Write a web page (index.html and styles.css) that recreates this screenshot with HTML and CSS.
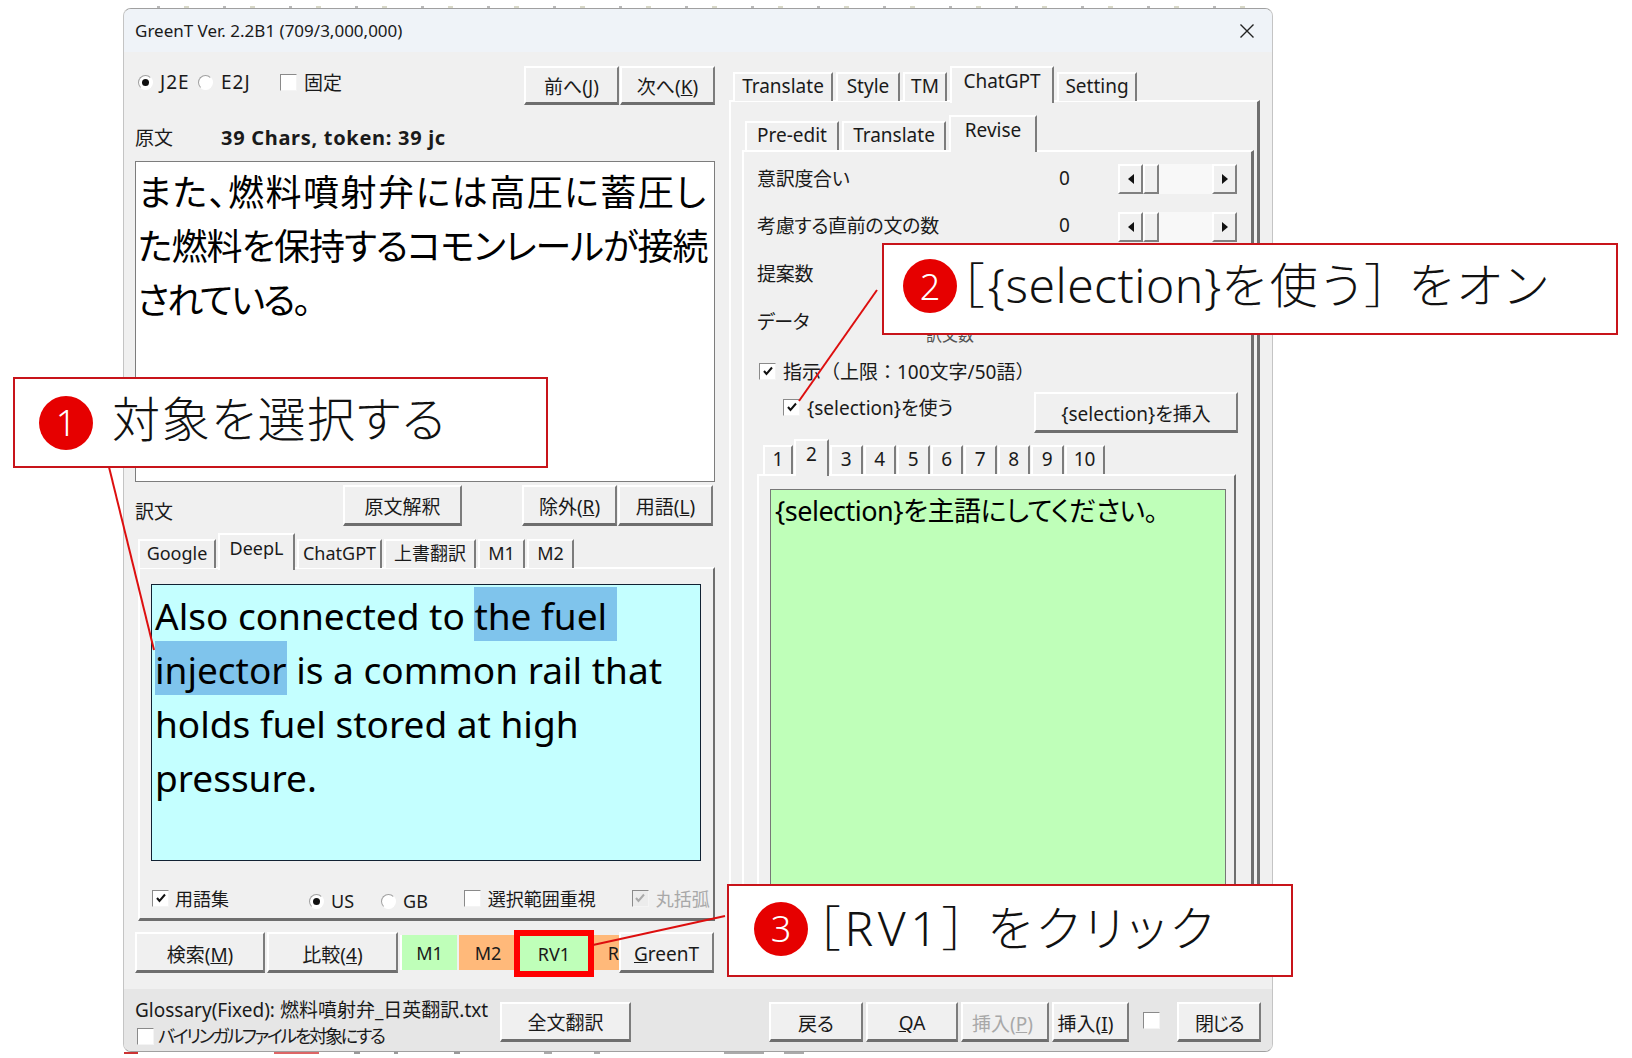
FILE: index.html
```html
<!DOCTYPE html>
<html lang="ja">
<head>
    <meta charset="utf-8">
    <title>GreenT</title>
    <link rel="stylesheet" href="styles.css">
</head>
<body>
<div class="over-strip"></div>
<div class="window">
    <div class="title-bar">
        <span>GreenT Ver. 2.2B1 (709/3,000,000)</span>
        <svg class="close-icon" width="16" height="16" viewBox="0 0 16 16"><path d="M1.5 1.5L14.5 14.5M14.5 1.5L1.5 14.5" stroke="#222" stroke-width="1.4" fill="none"/></svg>
    </div>
    <div class="main">
        <div class="left-col">
            <div class="top-row">
                <div class="mode-opts">
                    <span class="radio on"></span><span class="opt-j2e">J2E</span>
                    <span class="radio"></span><span class="opt-e2j">E2J</span>
                    <span class="chk"></span><span>固定</span>
                </div>
                <div class="btn-pair">
                    <button class="btn">前へ(<u>J</u>)</button>
                    <button class="btn">次へ(<u>K</u>)</button>
                </div>
            </div>
            <div class="src-label">
                <span class="src-title">原文</span>
                <b>39 Chars, token: 39 jc</b>
            </div>
            <div class="src-box"><span class="src-wide">また、燃料噴射弁には高圧に蓄圧し</span><br><span class="src-tight">た燃料を保持するコモンレールが接続</span><br><span class="src-last">されている。</span></div>
            <div class="mid-row">
                <span class="mid-title">訳文</span>
                <button class="btn btn-explain">原文解釈</button>
                <div class="btn-pair">
                    <button class="btn">除外(<u>R</u>)</button>
                    <button class="btn">用語(<u>L</u>)</button>
                </div>
            </div>
            <div class="tabs tabs-result">
                <div class="tab">Google</div>
                <div class="tab active">DeepL</div>
                <div class="tab">ChatGPT</div>
                <div class="tab">上書翻訳</div>
                <div class="tab">M1</div>
                <div class="tab">M2</div>
            </div>
            <div class="panel panel-result">
                <div class="result-box">Also connected to <span class="sel">the fuel&nbsp;<br>injector</span> is a common rail that<br>holds fuel stored at high<br>pressure.</div>
                <div class="result-opts">
                    <span class="chk checked"><svg width="12" height="12" viewBox="0 0 12 12"><path d="M2 6l2.5 3L10 2.5" stroke="#111" stroke-width="2" fill="none"/></svg></span>
                    <span class="opt-glossary">用語集</span>
                    <span class="radio on low"></span><span class="opt-us low">US</span>
                    <span class="radio low"></span><span class="opt-gb low">GB</span>
                    <span class="chk"></span><span class="opt-range">選択範囲重視</span>
                    <span class="chk checked off"><svg width="12" height="12" viewBox="0 0 12 12"><path d="M2 6l2.5 3L10 2.5" stroke="#aaa" stroke-width="2" fill="none"/></svg></span>
                    <span class="opt-paren">丸括弧</span>
                </div>
            </div>
            <div class="cmd-row">
                <button class="btn">検索(<u>M</u>)</button>
                <button class="btn">比較(<u>4</u>)</button>
                <div class="flat green">M1</div>
                <div class="flat orange">M2</div>
                <div class="flat green picked">RV1</div>
                <div class="flat orange clipped">R</div>
                <button class="btn"><u>G</u>reenT</button>
            </div>
        </div>
        <div class="right-col">
            <div class="tabs tabs-main">
                <div class="tab">Translate</div>
                <div class="tab">Style</div>
                <div class="tab">TM</div>
                <div class="tab active">ChatGPT</div>
                <div class="tab">Setting</div>
            </div>
            <div class="panel panel-main">
                <div class="tabs tabs-sub">
                    <div class="tab">Pre-edit</div>
                    <div class="tab">Translate</div>
                    <div class="tab active">Revise</div>
                </div>
                <div class="panel panel-sub">
                    <div class="param-row">
                        <span class="param-name">意訳度合い</span><span class="param-val">0</span>
                        <div class="scroll"><span class="sb-btn"><i class="arrow-l"></i></span><span class="sb-thumb"></span><span class="sb-track"></span><span class="sb-btn"><i class="arrow-r"></i></span></div>
                    </div>
                    <div class="param-row">
                        <span class="param-name">考慮する直前の文の数</span><span class="param-val">0</span>
                        <div class="scroll"><span class="sb-btn"><i class="arrow-l"></i></span><span class="sb-thumb"></span><span class="sb-track"></span><span class="sb-btn"><i class="arrow-r"></i></span></div>
                    </div>
                    <div class="param-row">
                        <span class="param-name">提案数</span>
                    </div>
                    <div class="param-row">
                        <span class="param-name">データ</span>
                        <span class="param-hidden">訳文数</span>
                    </div>
                    <div class="instr-row">
                        <span class="chk checked"><svg width="12" height="12" viewBox="0 0 12 12"><path d="M2 6l2.5 3L10 2.5" stroke="#111" stroke-width="2" fill="none"/></svg></span>
                        <span class="no-palt">指示（上限：100文字/50語）</span>
                    </div>
                    <div class="sel-row">
                        <div class="sel-opt">
                            <span class="chk checked"><svg width="12" height="12" viewBox="0 0 12 12"><path d="M2 6l2.5 3L10 2.5" stroke="#111" stroke-width="2" fill="none"/></svg></span>
                            <span>{selection}を使う</span>
                        </div>
                        <button class="btn btn-insert">{selection}を挿入</button>
                    </div>
                    <div class="tabs tabs-num">
                        <div class="tab">1</div>
                        <div class="tab active">2</div>
                        <div class="tab">3</div>
                        <div class="tab">4</div>
                        <div class="tab">5</div>
                        <div class="tab">6</div>
                        <div class="tab">7</div>
                        <div class="tab">8</div>
                        <div class="tab">9</div>
                        <div class="tab">10</div>
                    </div>
                    <div class="panel panel-num">
                        <div class="instr-box">{selection}を主語にしてください。</div>
                    </div>
                </div>
            </div>
        </div>
    </div>
    <div class="footer">
        <div class="foot-info">
            <div>Glossary(Fixed): 燃料噴射弁_日英翻訳.txt</div>
            <div class="foot-bi"><span class="chk"></span><span>バイリンガルファイルを対象にする</span></div>
        </div>
        <button class="btn btn-full">全文翻訳</button>
        <div class="foot-btns">
            <button class="btn">戻る</button>
            <button class="btn"><u>Q</u>A</button>
            <button class="btn off">挿入(<u>P</u>)</button>
            <button class="btn">挿入(<u>I</u>)</button>
            <span class="chk"></span>
            <button class="btn btn-close">閉じる</button>
        </div>
    </div>
</div>
<div class="under-strip"></div>

<svg class="leaders" width="1632" height="1058" viewBox="0 0 1632 1058">
    <path d="M109 467L154 650" />
    <path d="M877 290L799 401" />
    <path d="M725 916L593 945" />
</svg>

<div class="callout callout-1"><span class="num">1</span><span class="note">対象を選択する</span></div>
<div class="callout callout-2"><span class="num">2</span><span class="note">［<span class="note-sel">{selection}</span>を使う］ をオン</span></div>
<div class="callout callout-3"><span class="num">3</span><span class="note">［RV1］ をクリック</span></div>
</body>
</html>
```

FILE: styles.css
```css
*{
    box-sizing: border-box;
}
html, body{
    margin: 0;
    padding: 0;
    height: 1058px;
    overflow: hidden;
    background: #fff;
}
body{
    position: relative;
    font-family: "Noto Sans", "Noto Sans CJK JP", sans-serif;
    font-feature-settings: "palt";
    font-size: 19px;
    color: #1a1a1a;
}
.no-palt{
    font-feature-settings: normal;
}
.over-strip{
    height: 2px;
    width: 1150px;
    margin: 6px 0 0 123px;
    background: repeating-linear-gradient(90deg, #fff 0 34px, #b9b9b9 34px 37px, #fff 37px 61px, #d8d8c8 61px 66px);
}
.window{
    margin: 0 0 0 123px;
    width: 1150px;
    height: 1044px;
    background: #f0f0f0;
    border: 1px solid #c4c4c4;
    border-top-color: #a0a0a0;
    border-bottom-color: #a0a0a0;
    border-radius: 8px;
    overflow: hidden;
    display: flex;
    flex-direction: column;
}
.title-bar{
    height: 43px;
    flex: none;
    background: #eff3f8;
    display: flex;
    align-items: center;
    justify-content: space-between;
    padding: 0 17px 0 11px;
    font-size: 17px;
}
.close-icon{
    display: block;
}
.main{
    height: 937px;
    flex: none;
    display: flex;
    padding-left: 11px;
    gap: 14px;
}
.left-col{
    width: 580px;
    flex: none;
    padding-top: 14px;
}
.right-col{
    width: 531px;
    flex: none;
    padding-top: 14px;
}

/* buttons */
.btn{
    font: inherit;
    color: inherit;
    height: 100%;
    padding: 1px 0 0;
    background: #f0f0f0;
    border: 0;
    border-top: 2px solid #fff;
    border-left: 2px solid #fff;
    border-right: 2px solid #7c7c7c;
    border-bottom: 3px solid #6e6e6e;
    white-space: nowrap;
}
.btn.off{
    color: #a8a8a8;
}
.btn-pair{
    display: grid;
    grid-template-columns: 95px 95px;
    column-gap: 1px;
}

/* checks and radios */
.chk{
    width: 17px;
    height: 17px;
    flex: none;
    background: #fff;
    border: 1px solid #8a8a8a;
    border-right-color: #f4f4f4;
    border-bottom-color: #f4f4f4;
    display: inline-flex;
    align-items: center;
    justify-content: center;
}
.chk.off{
    background: #ececec;
}
.radio{
    width: 15px;
    height: 15px;
    flex: none;
    background: #fff;
    border-radius: 50%;
    border: 1px solid #a0a0a0;
    border-right-color: #fff;
    border-bottom-color: #fff;
    display: inline-block;
    position: relative;
}
.radio.on::after{
    content: "";
    position: absolute;
    left: 3px;
    top: 3px;
    width: 7px;
    height: 7px;
    border-radius: 50%;
    background: #111;
}

/* left side */
.top-row{
    height: 39px;
    display: flex;
    justify-content: space-between;
}
.mode-opts{
    display: flex;
    align-items: center;
    height: 32px;
    padding-left: 3px;
}
.opt-j2e{
    width: 29px;
    margin: 0 9px 0 7px;
    letter-spacing: 1px;
}
.opt-e2j{
    width: 28px;
    margin: 0 31px 0 8px;
    letter-spacing: 1px;
}
.mode-opts .chk + span{
    margin-left: 7px;
}
.src-label{
    margin-top: 20px;
    height: 24px;
    display: flex;
    align-items: center;
}
.src-label b{
    font-size: 20px;
    letter-spacing: 0.7px;
}
.src-title{
    width: 86px;
}
.src-box{
    margin-top: 12px;
    height: 321px;
    background: #fff;
    border: 1px solid #7d7d7d;
    padding: 4px 2px 0;
    font-size: 36px;
    line-height: 54px;
    color: #000;
    overflow: hidden;
    white-space: nowrap;
}
.src-wide{
    letter-spacing: 1.5px;
}
.src-tight{
    letter-spacing: -0.9px;
}
.src-last{
    letter-spacing: -2px;
    margin-left: -1px;
}
.mid-row{
    margin-top: 3px;
    height: 41px;
    display: flex;
}
.mid-title{
    width: 208px;
    padding-top: 12px;
}
.btn-explain{
    width: 119px;
    margin-right: 60px;
}

/* tabs */
.tabs{
    display: grid;
    align-items: end;
    column-gap: 2px;
    position: relative;
    z-index: 1;
}
.tab{
    height: 29px;
    background: #f0f0f0;
    border-top: 2px solid #fff;
    border-left: 2px solid #fff;
    border-right: 2px solid #7c7c7c;
    text-align: center;
    line-height: 24px;
    white-space: nowrap;
}
.tab.active{
    height: 37px;
    margin-bottom: -2px;
    line-height: 26px;
    padding-bottom: 8px;
}
.tabs-result{
    margin-top: 7px;
    height: 34px;
    padding-left: 3px;
    font-size: 18px;
    grid-template-columns: 78px 77px 85px 92px 47px 47px;
}
.tabs-main{
    height: 35px;
    margin-top: 0;
    padding-left: 4px;
    grid-template-columns: 100px 64px 44px 104px 80px;
    column-gap: 3px;
}
.tabs-sub{
    height: 36px;
    margin-top: 12px;
    padding-left: 3px;
    grid-template-columns: 94px 104px 88px;
    column-gap: 3px;
}
.tabs-num{
    height: 37px;
    margin-top: 13px;
    padding-left: 6px;
    grid-template-columns: 30px 35px repeat(7, 32.5px) 40px;
    column-gap: 1px;
}
.panel{
    background: #f0f0f0;
    border-top: 2px solid #fff;
    border-left: 2px solid #fff;
    border-right: 3px solid #6e6e6e;
    border-bottom: 3px solid #6e6e6e;
}

/* result panel */
.panel-result{
    height: 354px;
    margin-left: 3px;
    border-right-width: 2px;
    padding: 15px 12px 0 11px;
}
.result-box{
    height: 277px;
    background: #c4ffff;
    border: 1px solid #123;
    padding: 4px 3px 0;
    font-size: 37px;
    line-height: 54px;
    color: #000;
    white-space: nowrap;
}
.sel{
    background: #7fc4ec;
    padding-top: 3px;
}
.result-opts{
    margin-top: 22px;
    height: 30px;
    display: flex;
    align-items: center;
    white-space: nowrap;
    padding-left: 1px;
    font-size: 18px;
}
.result-opts > *{
    flex: none;
}
.low{
    margin-top: 6px;
}
.opt-glossary{
    width: 134px;
    margin-left: 6px;
}
.opt-us{
    margin: 6px 27px 0 7px;
}
.opt-gb{
    margin: 6px 36px 0 7px;
}
.opt-range{
    margin: 0 36px 0 7px;
}
.opt-paren{
    margin-left: 7px;
    color: #a8a8a8;
}
.cmd-row{
    margin-top: 11px;
    height: 41px;
    display: grid;
    grid-template-columns: 130px 131px 57px 58px 68px 28px 95px;
    column-gap: 2px;
}
.cmd-row .btn, .foot-btns .btn{
    padding-top: 3px;
}
.flat{
    margin: 3px 0 3px;
    padding-top: 1px;
    display: flex;
    align-items: center;
    justify-content: center;
    font-size: 18px;
}
.green{
    background: #bfffb9;
    border-left: 2px solid #fff;
}
.orange{
    background: #ffb97a;
}
.picked{
    position: relative;
    outline: 6px solid #f00;
    outline-offset: 0;
    margin: 4px -1px 2px 1px;
    border: 0;
}
.clipped{
    justify-content: flex-end;
    overflow: hidden;
    margin-right: -2px;
}

/* right side */
.panel-main{
    height: 862px;
    padding: 0 3px 0 11px;
    margin-top: -1px;
}
.panel-sub{
    height: 800px;
    padding: 2px 13px 0 13px;
}
.param-row{
    height: 48px;
    display: flex;
    align-items: center;
    position: relative;
}
.param-row:first-child{
    height: 47px;
}
.param-name{
    width: 302px;
    flex: none;
    letter-spacing: -0.3px;
}
.param-val{
    width: 59px;
    flex: none;
}
.param-hidden{
    font-size: 16px;
    margin-top: 26px;
    margin-left: -133px;
    color: #555;
}
.scroll{
    width: 119px;
    height: 30px;
    margin-top: 3px;
    display: flex;
}
.sb-btn{
    width: 25px;
    flex: none;
    background: #f0f0f0;
    border-top: 2px solid #fff;
    border-left: 2px solid #fff;
    border-right: 2px solid #808080;
    border-bottom: 2px solid #808080;
    display: flex;
    align-items: center;
    justify-content: center;
}
.sb-thumb{
    width: 16px;
    flex: none;
    background: #f0f0f0;
    border-top: 2px solid #fff;
    border-left: 2px solid #fff;
    border-right: 2px solid #808080;
    border-bottom: 2px solid #808080;
}
.sb-track{
    flex: 1;
    background: #f8f8f8;
}
.arrow-l{
    border: 5px solid transparent;
    border-right: 6px solid #111;
    border-left: 0;
}
.arrow-r{
    border: 5px solid transparent;
    border-left: 6px solid #111;
    border-right: 0;
}
.instr-row{
    margin-top: 14px;
    height: 24px;
    display: flex;
    align-items: center;
    gap: 7px;
    padding-left: 2px;
}
.sel-row{
    display: flex;
    justify-content: space-between;
    height: 41px;
}
.sel-opt{
    display: flex;
    align-items: center;
    gap: 7px;
    height: 24px;
    margin-top: 12px;
    padding-left: 26px;
}
.btn-insert{
    width: 204px;
    margin-top: 9px;
    height: 41px;
}
.panel-num{
    height: 440px;
    padding: 13px 8px 0 11px;
    border-right-width: 2px;
    width: 479px;
}
.instr-box{
    height: 420px;
    background: #bfffb9;
    border: 1px solid #777;
    padding: 2px 4px;
    font-size: 27px;
    letter-spacing: -0.5px;
    line-height: 38px;
    color: #000;
}

/* footer */
.footer{
    flex: 1;
    background: #e6e6e6;
    display: flex;
    padding-left: 11px;
    position: relative;
}
.foot-info{
    width: 365px;
    padding-top: 9px;
    line-height: 24px;
    white-space: nowrap;
}
.foot-bi{
    display: flex;
    align-items: center;
    gap: 4px;
    margin: 2px 0 0 2px;
    font-size: 18px;
    letter-spacing: -2.3px;
}
.btn-full{
    width: 131px;
    height: 40px;
    margin-top: 13px;
}
.foot-btns{
    margin-left: 138px;
    margin-top: 13px;
    height: 40px;
    display: grid;
    grid-template-columns: 94px 92px 88px 77px 17px 84px;
    column-gap: 3px;
    align-items: start;
}
.foot-btns .chk{
    margin: 10px 0 0 11px;
}
.foot-btns .btn:nth-child(3){
    padding-right: 5px;
}
.foot-btns .btn:nth-child(4){
    padding-right: 10px;
}
.foot-btns .btn-close{
    margin-left: 25px;
    width: 84px;
    letter-spacing: -1.5px;
}

.under-strip{
    height: 2px;
    width: 800px;
    margin-left: 124px;
    background: linear-gradient(90deg, #c33 0 14px, #fff 14px 150px, #d66 150px 195px, #fff 195px 230px, #999 230px 236px, #fff 236px 270px, #999 270px 274px, #fff 274px 330px, #999 330px 336px, #fff 336px 420px, #aaa 420px 428px, #fff 428px 470px, #aaa 470px 476px, #fff 476px 600px, #aaa 600px 640px, #fff 640px 660px, #aaa 660px 680px, #fff 680px);
}

/* annotations */
.leaders{
    position: absolute;
    left: 0;
    top: 0;
    pointer-events: none;
}
.leaders path{
    stroke: #dd0f0f;
    stroke-width: 2;
    fill: none;
}
.callout{
    position: absolute;
    background: #fff;
    border: 2px solid #c8141a;
    display: flex;
    align-items: center;
    padding-left: 24px;
    font-weight: 300;
    font-size: 48px;
    color: #111;
    white-space: nowrap;
}
.callout-1{
    left: 13px;
    top: 377px;
    width: 535px;
    height: 91px;
}
.callout-2{
    left: 882px;
    top: 243px;
    width: 736px;
    height: 92px;
    padding-left: 19px;
}
.callout-3{
    left: 727px;
    top: 884px;
    width: 566px;
    height: 93px;
    padding-left: 25px;
}
.num{
    width: 54px;
    height: 54px;
    flex: none;
    border-radius: 50%;
    background: #e60000;
    color: #fff;
    font-size: 36px;
    display: flex;
    align-items: center;
    justify-content: center;
    margin-right: 19px;
}
.note{
    letter-spacing: 1.7px;
    margin-bottom: 14px;
}
.callout-2 .num{
    margin: 0 3px 6px 0;
}
.callout-2 .note{
    letter-spacing: 3.7px;
    margin-bottom: 14px;
}
.note-sel{
    letter-spacing: 0.5px;
}
.callout-3 .num{
    margin: 0 8px 4px 0;
}
.callout-3 .note{
    letter-spacing: 4.5px;
    margin-bottom: 12px;
}
```
